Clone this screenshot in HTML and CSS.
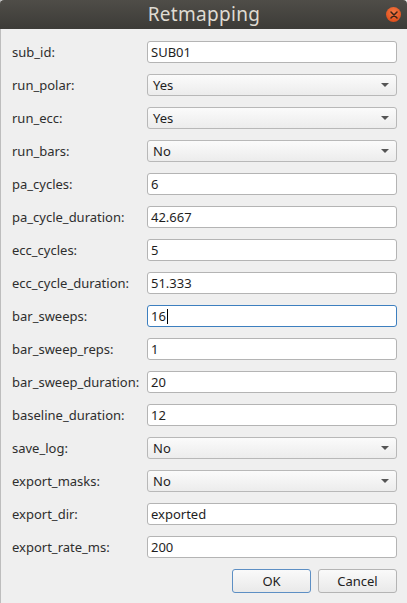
FILE: index.html
```html
<!DOCTYPE html>
<html>
<head>
<meta charset="utf-8">
<link rel="stylesheet" href="styles.css">
</head>
<body>
<div class="window">
  <div class="titlebar">
    <span class="title">Retmapping</span>
    <span class="close"><svg width="8" height="8" viewBox="0 0 8 8"><path d="M1 1 L7 7 M7 1 L1 7" stroke="#3b2418" stroke-width="1.5" stroke-linecap="round"/></svg></span>
  </div>
  <div class="content">
    <div class="form">
      <label>sub_id:</label><div class="edit">SUB01</div>
      <label>run_polar:</label><div class="combo">Yes<span class="arrow"></span></div>
      <label>run_ecc:</label><div class="combo">Yes<span class="arrow"></span></div>
      <label>run_bars:</label><div class="combo">No<span class="arrow"></span></div>
      <label>pa_cycles:</label><div class="edit">6</div>
      <label>pa_cycle_duration:</label><div class="edit">42.667</div>
      <label>ecc_cycles:</label><div class="edit">5</div>
      <label>ecc_cycle_duration:</label><div class="edit">51.333</div>
      <label>bar_sweeps:</label><div class="edit focus">16<span class="caret"></span></div>
      <label>bar_sweep_reps:</label><div class="edit">1</div>
      <label>bar_sweep_duration:</label><div class="edit">20</div>
      <label>baseline_duration:</label><div class="edit">12</div>
      <label>save_log:</label><div class="combo">No<span class="arrow"></span></div>
      <label>export_masks:</label><div class="combo">No<span class="arrow"></span></div>
      <label>export_dir:</label><div class="edit">exported</div>
      <label>export_rate_ms:</label><div class="edit">200</div>
    </div>
    <div class="buttons">
      <div class="btn default">OK</div>
      <div class="btn">Cancel</div>
    </div>
  </div>
</div>
</body>
</html>
```
FILE: styles.css
```css
html, body {
  margin: 0;
  padding: 0;
  background: #efefef;
}
.window {
  width: 407px;
  height: 603px;
  display: flex;
  flex-direction: column;
  background: #efefef;
  font-family: "Noto Sans", "DejaVu Sans", sans-serif;
  font-size: 13px;
  color: #2e2e2e;
  box-sizing: border-box;
  border-left: 1px solid #bdbdbd;
}
.titlebar {
  height: 29px;
  flex: none;
  background: linear-gradient(#4f4d48, #3c3b37);
  border-radius: 4px 4px 0 0;
  position: relative;
  display: flex;
  align-items: center;
  justify-content: center;
  margin-left: -1px;
}
.title {
  color: #dfdbd2;
  font-size: 19px;
  letter-spacing: 0.3px;
  line-height: 29px;
  padding-left: 1px;
}
.close {
  position: absolute;
  right: 6px;
  top: 7px;
  width: 15px;
  height: 15px;
  border-radius: 50%;
  background: radial-gradient(circle at 50% 35%, #f47a45, #e0521f 70%, #c8441a);
  display: flex;
  align-items: center;
  justify-content: center;
}
.content {
  padding: 12px 10px 0 11px;
  display: flex;
  flex-direction: column;
}
.form {
  display: grid;
  grid-template-columns: 135px 1fr;
  row-gap: 11px;
  align-items: center;
}
.form label {
  line-height: 22px;
  padding-left: 0px;
}
.edit, .combo {
  height: 22px;
  box-sizing: border-box;
  border: 1px solid #b4b4b4;
  border-radius: 3px;
  line-height: 20px;
  color: #1e1e1e;
  position: relative;
}
.edit {
  background: #ffffff;
  padding-left: 3px;
}
.combo {
  background: linear-gradient(#fbfbfb, #ececec);
  padding-left: 5px;
  border-color: #b8b8b8;
}
.arrow {
  position: absolute;
  right: 7px;
  top: 8px;
  width: 0;
  height: 0;
  border-left: 4px solid transparent;
  border-right: 4px solid transparent;
  border-top: 4px solid #555555;
}
.focus {
  border-color: #3d7fbf;
}
.caret {
  display: inline-block;
  width: 1px;
  height: 15px;
  background: #000;
  vertical-align: -3px;
  margin-left: 1px;
}
.buttons {
  display: flex;
  justify-content: flex-end;
  gap: 7px;
  margin-top: 11px;
}
.btn {
  width: 79px;
  height: 24px;
  box-sizing: border-box;
  border: 1px solid #b4b4b4;
  border-radius: 3px;
  background: linear-gradient(#fafafa, #e9e9e9);
  text-align: center;
  line-height: 22px;
  color: #222;
}
.btn.default {
  border-color: #5d8fc4;
}
```
